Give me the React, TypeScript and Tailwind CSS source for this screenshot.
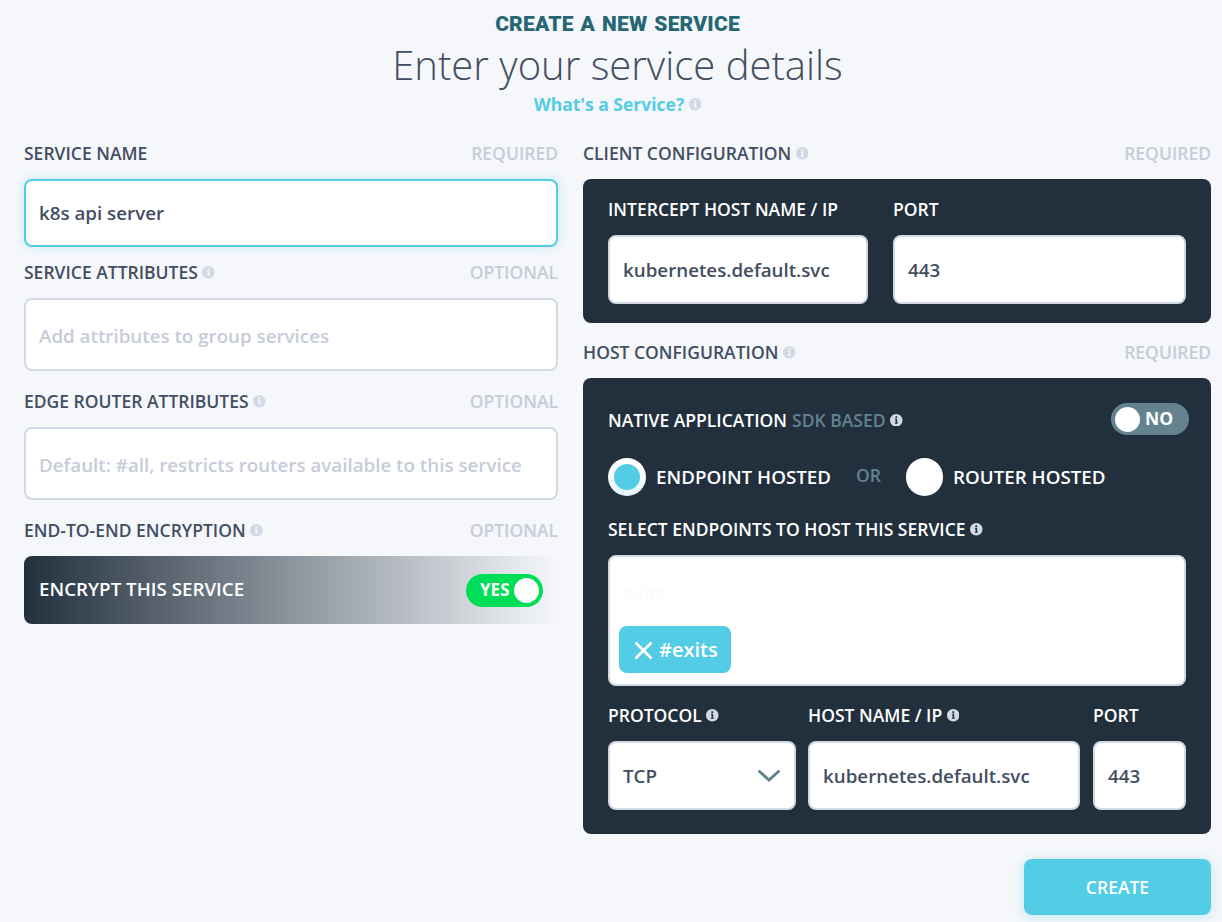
import React from "react";

function Info({ className = "text-[#d3d9e4]" }: { className?: string }) {
  return (
    <svg viewBox="0 0 12 12" className={`ml-[4.5px] h-[12.5px] w-[12.5px] shrink-0 ${className}`}>
      <path
        fill="currentColor"
        fillRule="evenodd"
        d="M6 0a6 6 0 1 1 0 12A6 6 0 0 1 6 0ZM5.2 2.1v1.7h1.7V2.1ZM4.7 4.6v.9h.6v2.9h-.6v.9h2.8v-.9h-.6V4.6Z"
      />
    </svg>
  );
}

function FieldLabel({ text, note, info }: { text: string; note: string; info?: boolean }) {
  return (
    <div className="flex h-[51px] items-center text-[17.5px] leading-6 font-semibold text-[#434e61]">
      <span className="pb-0.5">{text}</span>
      {info && <Info />}
      <span className="ml-auto pb-0.5 text-[#c6ccd8]">{note}</span>
    </div>
  );
}

function PanelLabel({ text, info }: { text: string; info?: boolean }) {
  return (
    <div className="flex h-[51px] items-center text-[17.5px] leading-6 font-semibold whitespace-nowrap text-white">
      <span className="pb-0.5">{text}</span>
      {info && <Info />}
    </div>
  );
}

function Box({ className = "", children }: { className?: string; children: React.ReactNode }) {
  return (
    <div
      className={`flex items-center rounded-lg border-2 bg-white px-[13px] text-[18.75px] font-semibold ${className}`}
    >
      {children}
    </div>
  );
}

export default function App() {
  return (
    <div className="h-[922px] w-[1222px] overflow-hidden bg-[#f5f7fb] font-['Open_Sans','Noto_Sans',sans-serif] text-[#434e61]">
      <header className="flex h-[128px] flex-col items-center pt-[10px] pl-[13px]">
        <h1 className="h-[28px] font-['Roboto',sans-serif] text-[21px] leading-[28px] font-black tracking-[0.2px] whitespace-nowrap text-[#276673] [word-spacing:1.5px]">
          CREATE A NEW SERVICE
        </h1>
        <h2 className="h-[54px] text-[40px] leading-[54px] font-light whitespace-nowrap">Enter your service details</h2>
        <div className="flex h-6 items-center pt-px text-[17.5px] font-bold text-[#53cce5]">
          <span>What&apos;s a Service?</span>
          <Info />
        </div>
      </header>

      <main className="flex gap-[25px] pr-[11px] pl-6">
        <section className="w-[534px]">
          <FieldLabel text="SERVICE NAME" note="REQUIRED" />
          <Box className="h-[68px] border-[#53cce5] shadow-[0_0_10px_rgba(83,204,229,0.3)]">k8s api server</Box>
          <FieldLabel text="SERVICE ATTRIBUTES" note="OPTIONAL" info />
          <Box className="mb-[5px] h-[73px] border-[#d3d9e4] pt-[3px] text-[#c6ccd8]">
            Add attributes to group services
          </Box>
          <FieldLabel text="EDGE ROUTER ATTRIBUTES" note="OPTIONAL" info />
          <Box className="mb-[5px] h-[73px] border-[#d3d9e4] pt-[3px] text-[#c6ccd8]">
            Default: #all, restricts routers available to this service
          </Box>
          <FieldLabel text="END-TO-END ENCRYPTION" note="OPTIONAL" info />
          <div className="flex h-[68px] items-center justify-between rounded-lg bg-[linear-gradient(90deg,#22303e_0%,#f5f7fb_100%)] px-[15px] text-[18.75px] font-semibold text-white">
            <span className="pb-0.5">ENCRYPT THIS SERVICE</span>
            <div className="flex h-[33px] w-[77px] items-center justify-between rounded-full bg-[#00dd57] pr-1 pl-[14px] text-[17px] font-bold">
              <span>YES</span>
              <span className="h-[25px] w-[25px] rounded-full bg-white" />
            </div>
          </div>
        </section>

        <section className="w-[628px]">
          <FieldLabel text="CLIENT CONFIGURATION" note="REQUIRED" info />
          <div className="flex h-[144px] gap-[25px] rounded-lg bg-[#22303e] px-[25px] pt-[5px]">
            <div className="w-[260px]">
              <PanelLabel text="INTERCEPT HOST NAME / IP" />
              <Box className="h-[69px] border-[#d3d9e4] pt-px">kubernetes.default.svc</Box>
            </div>
            <div className="w-[293px]">
              <PanelLabel text="PORT" />
              <Box className="h-[69px] border-[#d3d9e4] pt-px">443</Box>
            </div>
          </div>

          <div className="h-[4px]" />
          <FieldLabel text="HOST CONFIGURATION" note="REQUIRED" info />
          <div className="h-[456px] rounded-lg bg-[#22303e] px-[25px] pt-[25px]">
            <div className="-mr-[3px] flex h-[34px] items-center text-[17.5px] font-semibold text-white">
              <span className="pt-px">NATIVE APPLICATION</span>
              <span className="ml-[5px] pt-px text-[#64838f]">SDK BASED</span>
              <Info />
              <div className="mb-0.5 ml-auto flex h-8 w-[78px] items-center rounded-full bg-[#64838f] pl-1 text-[17.5px] font-bold">
                <span className="h-[25px] w-[25px] rounded-full bg-white" />
                <span className="ml-[5px] pb-0.5">NO</span>
              </div>
            </div>

            <div className="mt-[21px] flex h-[38px] items-center text-[18.75px] font-semibold whitespace-nowrap text-white">
              <span className="flex h-[38px] w-[38px] items-center justify-center rounded-full bg-[linear-gradient(180deg,#ffffff_40%,#e2f5fa_100%)]">
                <span className="h-[26px] w-[26px] rounded-full bg-[#53cce5]" />
              </span>
              <span className="ml-[10px] w-[175px]">ENDPOINT HOSTED</span>
              <span className="ml-[25px] w-[25px] pb-[3px] text-[17.5px] font-semibold text-[#64838f]">OR</span>
              <span className="ml-[25px] h-[38px] w-[37px] rounded-full bg-white" />
              <span className="ml-[10px]">ROUTER HOSTED</span>
            </div>

            <div className="mt-[8px]">
              <PanelLabel text="SELECT ENDPOINTS TO HOST THIS SERVICE" info />
            </div>
            <div className="h-[131px] rounded-lg border-2 border-[#d3d9e4] bg-white px-[9px] pt-[24px] text-[18.75px] font-semibold">
              <div className="h-[45px] pl-1 leading-6 text-[#fafafa]">exits</div>
              <div className="flex h-[47px] w-[112px] items-center rounded-lg bg-[#53cce5] pl-[15px] text-[20px] text-white">
                <svg viewBox="0 0 19 19" className="mt-[2px] h-[19px] w-[19px]" fill="none" stroke="currentColor" strokeWidth="2.7">
                  <path d="M1.5 1.5 17.5 17.5M17.5 1.5 1.5 17.5" />
                </svg>
                <span className="ml-[6px]">#exits</span>
              </div>
            </div>

            <div className="mt-[4px] flex">
              <div className="w-[188px]">
                <PanelLabel text="PROTOCOL" info />
                <Box className="h-[69px] justify-between border-[#d3d9e4] pt-px">
                  <span>TCP</span>
                  <svg viewBox="0 0 24 14" className="h-[14px] w-6" fill="none" stroke="#64838f" strokeWidth="3" strokeLinecap="round">
                    <path d="M2.5 2.5 12 11 21.5 2.5" />
                  </svg>
                </Box>
              </div>
              <div className="ml-[12px] w-[272px]">
                <PanelLabel text="HOST NAME / IP" info />
                <Box className="h-[69px] border-[#d3d9e4] pt-px">kubernetes.default.svc</Box>
              </div>
              <div className="ml-[13px] w-[93px]">
                <PanelLabel text="PORT" />
                <Box className="h-[69px] border-[#d3d9e4] pt-px">443</Box>
              </div>
            </div>
          </div>

          <div className="flex justify-end pt-[25px]">
            <button className="h-[56px] w-[187px] rounded-lg bg-[#53cce5] pt-px text-[17.5px] font-semibold text-white shadow-[0_2px_12px_rgba(83,204,229,0.35)]">
              CREATE
            </button>
          </div>
        </section>
      </main>
    </div>
  );
}
